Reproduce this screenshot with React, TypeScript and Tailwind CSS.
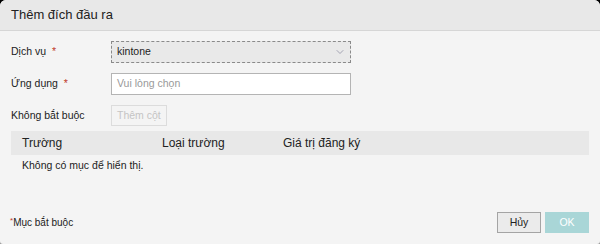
import { ChevronDown } from 'lucide-react';

export default function App() {
  return (
    <div className="w-[600px] h-[244px] bg-gradient-to-b from-[#000] to-[#999]" style={{ fontFamily: '"Liberation Sans", Arial, sans-serif' }}>
      <div className="w-full h-full rounded-t-[6px] rounded-b-[3px] bg-[#f4f4f4] flex flex-col overflow-hidden">
        {/* header */}
        <div className="h-[31px] bg-[#e8e8e8] border-b border-[#d6d6d6] flex items-center pl-[11px] text-[13px] text-[#222]">
          Thêm đích đầu ra
        </div>

        {/* body */}
        <div className="flex flex-col pl-[11px] pr-[11px] pt-[10px] text-[10.5px] text-[#222]">
          <div className="flex items-center h-[22px]">
            <div className="w-[100px]">
              Dịch vụ <span className="text-[#c0392b] ml-[3px]">*</span>
            </div>
            <div className="w-[240px] h-[22px] bg-[#e9e9e9] border border-dashed border-[#8a8a8a] flex items-center justify-between pl-[5px] pr-[4px] text-[10.5px] text-[#222]">
              kintone
              <ChevronDown className="w-[12px] h-[12px] text-[#8c8ca0]" strokeWidth={1.5} />
            </div>
          </div>

          <div className="flex items-center h-[22px] mt-[10px]">
            <div className="w-[100px]">
              Ứng dụng <span className="text-[#c0392b] ml-[3px]">*</span>
            </div>
            <div className="w-[240px] h-[22px] bg-white border border-[#b4b4b4] flex items-center pl-[5px] text-[10.5px] text-[#999]">
              Vui lòng chọn
            </div>
          </div>

          <div className="flex items-center h-[21px] mt-[10px]">
            <div className="w-[100px]">Không bắt buộc</div>
            <div className="h-[21px] px-[5px] border border-[#dcdcdc] bg-[#f4f4f4] flex items-center text-[10.5px] text-[#c4c4c4]">
              Thêm cột
            </div>
          </div>

          <div className="mt-[5px] h-[24px] bg-[#e8e8e8] flex items-center text-[12px] text-[#222]">
            <div className="w-[151px] pl-[11px]">Trường</div>
            <div className="w-[121px]">Loại trường</div>
            <div>Giá trị đăng ký</div>
          </div>
          <div className="h-[22px] flex items-center pl-[11px] text-[10.5px] text-[#222]">
            Không có mục để hiển thị.
          </div>
        </div>

        {/* footer */}
        <div className="mt-auto flex items-center justify-between pl-[10px] pr-[11px] pb-[11px] text-[10px] text-[#222]">
          <div>
            <span className="text-[#c0392b] text-[8px] align-top">*</span>Mục bắt buộc
          </div>
          <div className="flex gap-[4px]">
            <button className="w-[44px] h-[21px] bg-[#ebebeb] border border-[#a4a4a4] text-[10.5px] text-[#222]">Hủy</button>
            <button className="w-[44px] h-[21px] bg-[#a9d6d7] text-[10.5px] text-white">OK</button>
          </div>
        </div>
      </div>
    </div>
  );
}
